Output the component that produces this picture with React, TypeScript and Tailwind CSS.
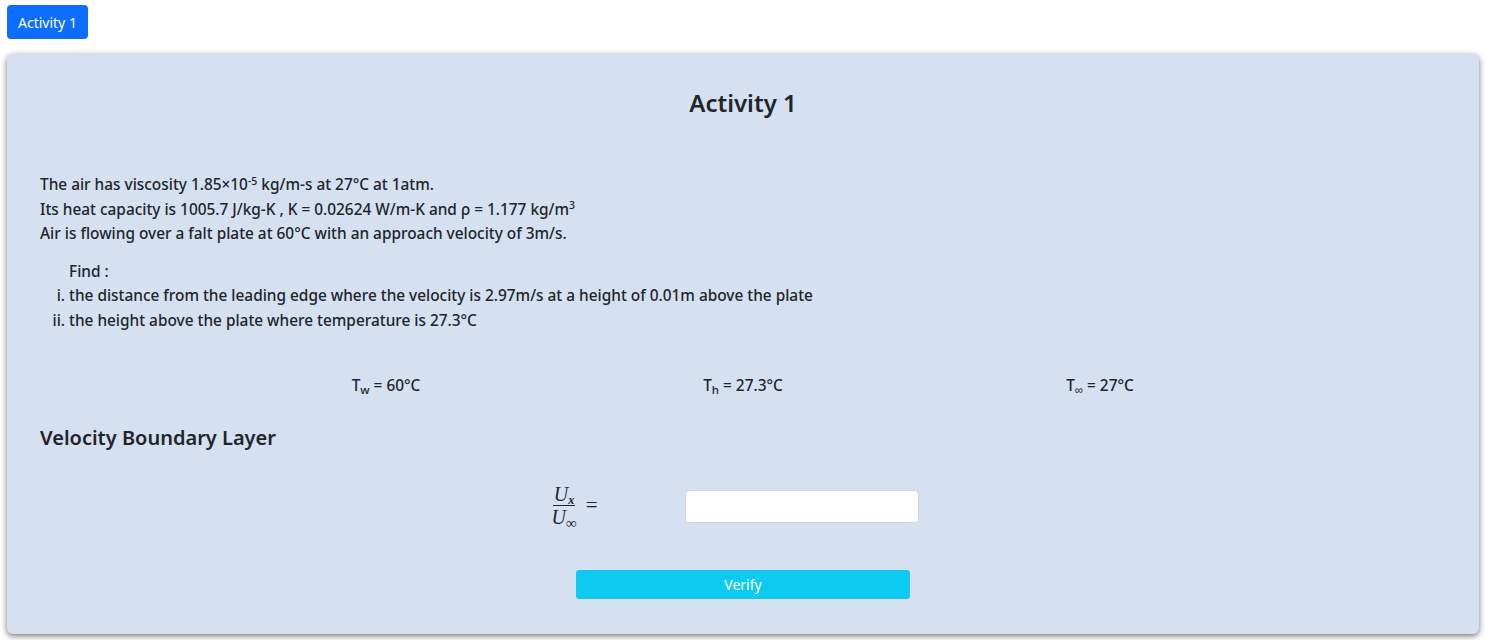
import React from 'react';

export default function App() {
  return (
    <div className="min-h-[640px] bg-white text-[#212529] font-['Noto_Sans',sans-serif]">
      <div className="px-[7px] pt-[5px]">
        <button className="h-[34px] rounded-[4px] bg-[#0d6efd] px-[11px] text-[14px] text-white">
          Activity 1
        </button>
      </div>

      <div className="mx-[7px] mt-[15px] rounded-[6px] bg-[#d5e0f1] px-[33px] pb-[35px] pt-[32px] shadow-[0_2px_6px_rgba(0,0,0,0.55)]">
        <h2 className="text-center text-[24px] font-semibold leading-[34px]">Activity 1</h2>

        <div className="mt-[53px] text-[15.4px] font-medium leading-[24.5px]">
          <p>
            The air has viscosity 1.85×10<sup className="text-[10.5px]">-5</sup> kg/m-s at 27°C at 1atm.
          </p>
          <p>
            Its heat capacity is 1005.7 J/kg-K , K = 0.02624 W/m-K and ρ = 1.177 kg/m
            <sup className="text-[10.5px]">3</sup>
          </p>
          <p>Air is flowing over a falt plate at 60°C with an approach velocity of 3m/s.</p>

          <p className="mt-[13px] pl-[29px]">Find :</p>
          <ol className="list-[lower-roman] pl-[29px]">
            <li>the distance from the leading edge where the velocity is 2.97m/s at a height of 0.01m above the plate</li>
            <li>the height above the plate where temperature is 27.3°C</li>
          </ol>
        </div>

        <div className="mt-[41px] flex justify-center text-[15.4px] font-medium">
          <div className="w-[357px] text-center">
            T<sub className="text-[11.5px]">w</sub> = 60°C
          </div>
          <div className="w-[357px] text-center">
            T<sub className="text-[11.5px]">h</sub> = 27.3°C
          </div>
          <div className="w-[357px] text-center">
            T<sub className="text-[11.5px]">∞</sub> = 27°C
          </div>
        </div>

        <h4 className="mt-[26px] text-[20px] font-semibold leading-[30px]">Velocity Boundary Layer</h4>

        <div className="mt-[30px] flex items-center">
          <div className="ml-[409px] flex w-[236px] items-center justify-center pl-[14px] font-['Liberation_Serif',serif] text-[20px]">
            <span className="inline-flex flex-col items-center">
              <span className="border-b border-[#212529] px-[1px] leading-[22px] italic">
                U<sub className="text-[12px] font-bold">x</sub>
              </span>
              <span className="px-[1px] leading-[23px] italic">
                U<sub className="text-[15px] not-italic">∞</sub>
              </span>
            </span>
            <span className="ml-[8px] text-[21px]">=</span>
          </div>
          <input
            type="text"
            className="h-[33px] w-[234px] rounded-[4px] border border-[#ced4da] bg-white"
          />
        </div>

        <div className="mt-[41px] flex justify-center">
          <button className="h-[29px] w-[334px] rounded-[3px] bg-[#0dcaf0] text-[14px] text-white">
            Verify
          </button>
        </div>
      </div>
    </div>
  );
}
